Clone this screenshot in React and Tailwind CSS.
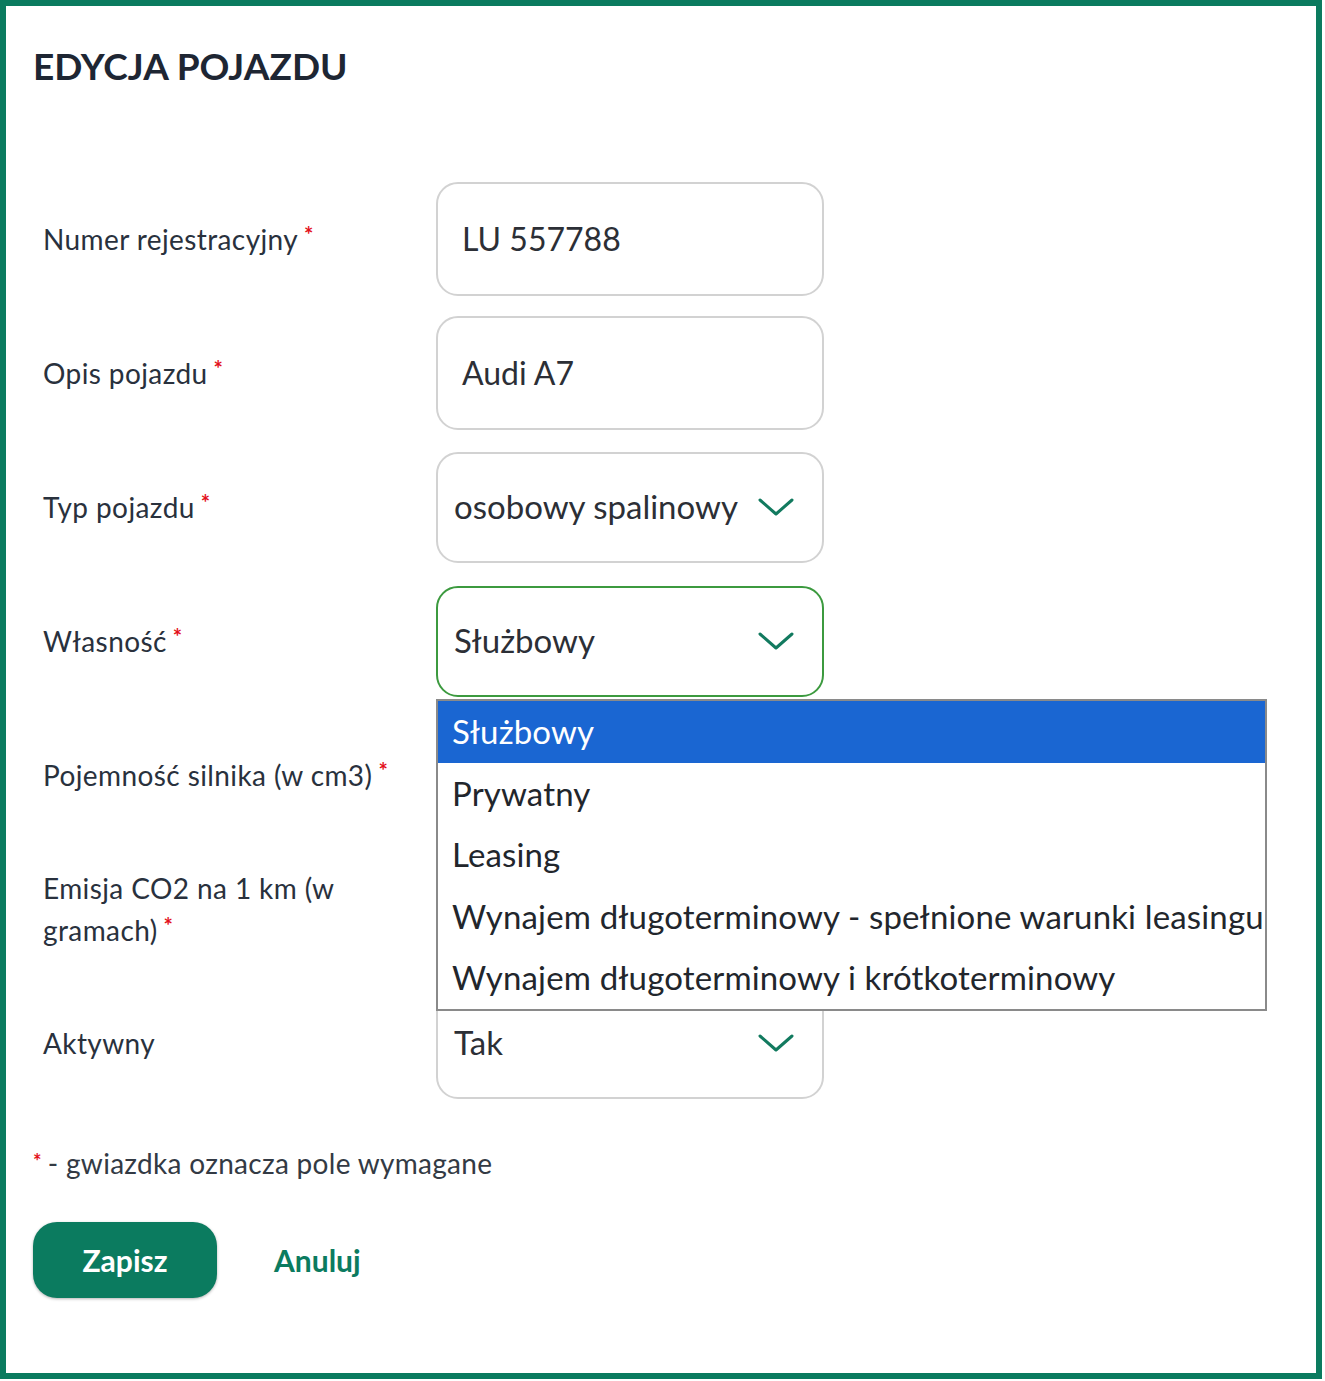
import React from "react";

const Chevron = () => (
  <svg width="36" height="20" viewBox="0 0 36 20" fill="none" className="shrink-0">
    <path d="M2 3 L18 17 L34 3" stroke="#127a5f" strokeWidth="3" strokeLinecap="round" strokeLinejoin="round" />
  </svg>
);

const Star = () => (
  <span className="text-[#e3101a] text-[22px] font-bold align-top relative top-[-4px] ml-[6px]">*</span>
);

const Row = ({ label, children }) => (
  <div className="flex items-center h-[134px]">
    <div className="w-[430px] shrink-0 pl-[37px] text-[28px] leading-[42px] text-[#29313d] tracking-[0.4px]">
      {label}
    </div>
    {children}
  </div>
);

const InputBox = ({ value, h = "h-[114px]" }) => (
  <div className={`w-[388px] ${h} rounded-[22px] border-2 border-[#d2d2d2] flex items-center pl-[24px] text-[32px] text-[#2c2f36]`}>
    {value}
  </div>
);

const SelectBox = ({ value, green }) => (
  <div
    className={`w-[388px] h-[111px] rounded-[22px] border-2 ${
      green ? "border-[#3c9a3f]" : "border-[#d2d2d2]"
    } flex items-center justify-between pl-[16px] pr-[28px] text-[33px] text-[#2c2f36]`}
  >
    <span>{value}</span>
    <Chevron />
  </div>
);

export default function App() {
  const options = [
    "Służbowy",
    "Prywatny",
    "Leasing",
    "Wynajem długoterminowy - spełnione warunki leasingu",
    "Wynajem długoterminowy i krótkoterminowy",
  ];
  return (
    <div className="w-[1322px] h-[1379px] border-[6px] border-[#0b7b5f] bg-white relative font-['Lato','Open_Sans',sans-serif]">
      <h1 className="pl-[27px] pt-[36px] text-[37px] leading-[48px] font-bold text-[#1e2633]">
        EDYCJA POJAZDU
      </h1>
      <div className="mt-[82px]">
        <Row label={<>Numer rejestracyjny<Star /></>}>
          <InputBox value="LU 557788" />
        </Row>
        <Row label={<>Opis pojazdu<Star /></>}>
          <InputBox value="Audi A7" />
        </Row>
        <Row label={<>Typ pojazdu<Star /></>}>
          <SelectBox value="osobowy spalinowy" />
        </Row>
        <Row label={<>Własność<Star /></>}>
          <SelectBox value="Służbowy" green />
        </Row>
        <Row label={<>Pojemność silnika (w cm3)<Star /></>}>
          <InputBox value="" h="h-[111px]" />
        </Row>
        <Row label={<>Emisja CO2 na 1 km (w<br />gramach)<Star /></>}>
          <InputBox value="" h="h-[111px]" />
        </Row>
        <Row label="Aktywny">
          <SelectBox value="Tak" />
        </Row>
      </div>
      <div className="pl-[27px] mt-[33px] text-[28px] leading-[40px] text-[#333a44] tracking-[0.3px]">
        <span className="text-[#e3101a] text-[20px] font-bold align-top relative top-[-2px] mr-[6px]">*</span>- gwiazdka oznacza pole wymagane
      </div>
      <div className="pl-[27px] mt-[39px] flex items-center">
        <button className="w-[184px] h-[76px] rounded-[24px] bg-[#0b7b5f] text-white text-[30px] font-bold shadow-[0_1px_3px_rgba(0,0,0,0.3)]">
          Zapisz
        </button>
        <span className="ml-[57px] text-[30px] font-bold text-[#0b7b5f]">Anuluj</span>
      </div>

      <div className="absolute left-[430px] top-[693px] w-[831px] h-[312px] border-2 border-[#8a8a8a] bg-white text-[33px] text-[#22262c] tracking-[0.15px]">
        {options.map((o, i) => (
          <div
            key={o}
            className={`h-[61.6px] flex items-center pl-[14px] whitespace-nowrap ${
              i === 0 ? "bg-[#1a66d2] text-white" : ""
            }`}
          >
            {o}
          </div>
        ))}
      </div>
    </div>
  );
}
